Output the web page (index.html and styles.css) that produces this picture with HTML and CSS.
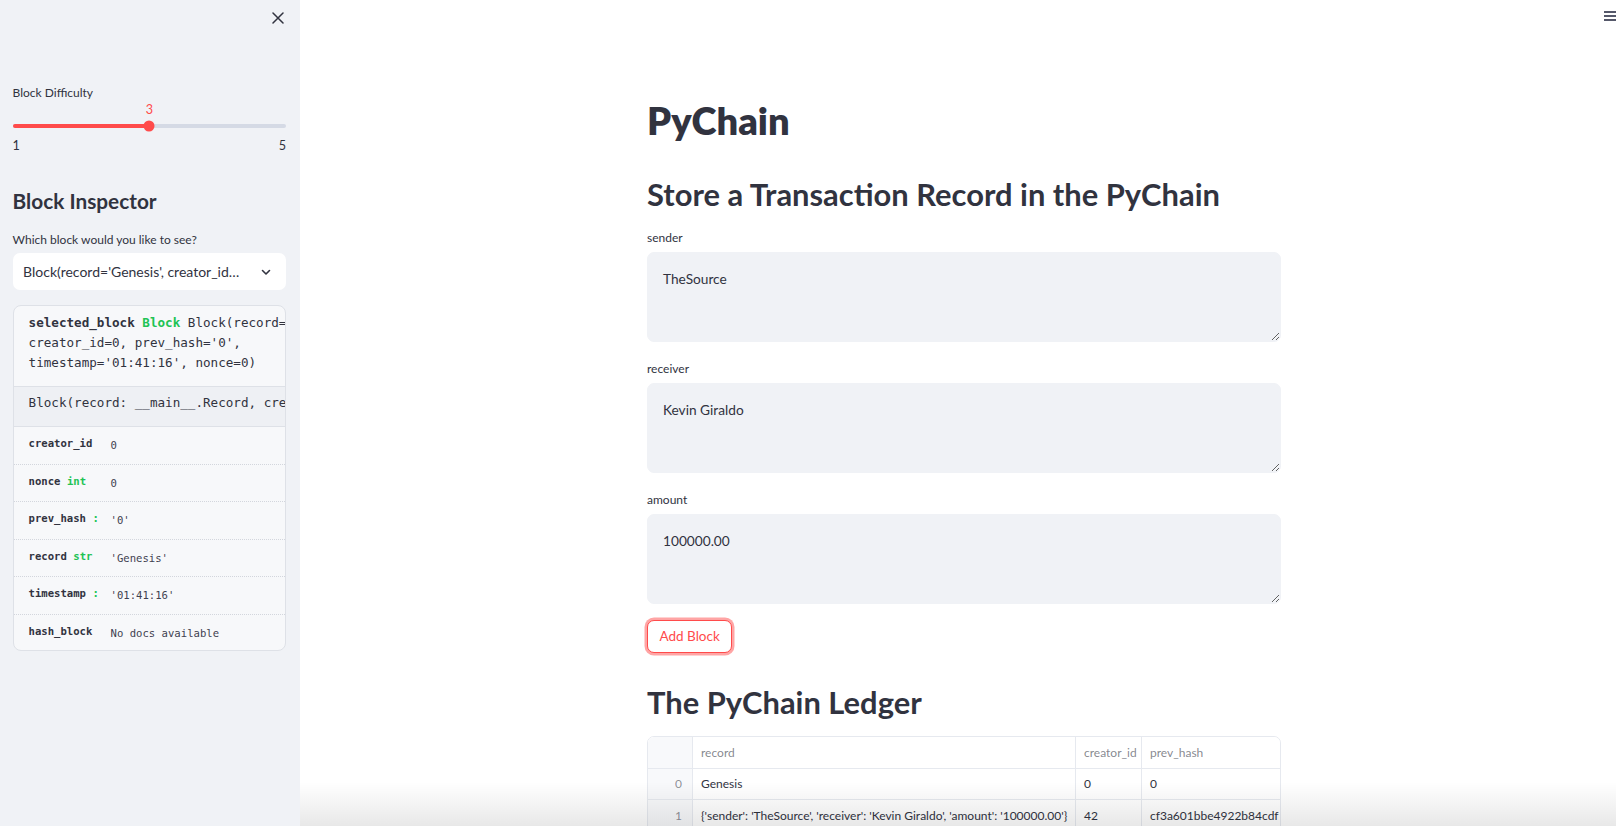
FILE: index.html
```html
<!DOCTYPE html>
<html lang="en">
<head>
<meta charset="utf-8">
<title>PyChain</title>
<link rel="stylesheet" href="styles.css">
</head>
<body>
<aside class="sidebar">
  <div class="sb-top">
    <button class="close-btn" aria-label="Close sidebar">
      <svg width="12" height="12" viewBox="0 0 12 12"><path d="M1 1L11 11M11 1L1 11" stroke="#31333F" stroke-width="1.5" fill="none" stroke-linecap="round"/></svg>
    </button>
  </div>
  <div class="sb-content">
    <div class="wlabel">Block Difficulty</div>
    <div class="slider">
      <div class="slider-value-row"><span class="slider-value" style="left:50%">3</span></div>
      <div class="track-wrap">
        <div class="track"><div class="track-fill" style="width:50%"></div></div>
        <div class="thumb" style="left:50%"></div>
      </div>
      <div class="minmax"><span>1</span><span>5</span></div>
    </div>
    <h2 class="sb-h2">Block Inspector</h2>
    <div class="wlabel sel-label">Which block would you like to see?</div>
    <div class="select">
      <span class="select-text">Block(record='Genesis', creator_id…</span>
      <svg class="chev" width="12" height="12" viewBox="0 0 12 12"><path d="M2.5 4.5L6 8L9.5 4.5" stroke="#31333F" stroke-width="1.6" fill="none" stroke-linecap="round" stroke-linejoin="round"/></svg>
    </div>
    <div class="card">
      <div class="card-head">
        <div class="mono-line"><b>selected_block</b> <span class="green">Block</span> Block(record='Genesis',</div>
        <div class="mono-line">creator_id=0, prev_hash='0',</div>
        <div class="mono-line">timestamp='01:41:16', nonce=0)</div>
      </div>
      <div class="card-sig"><div class="mono-line">Block(record: __main__.Record, creator_id: int, prev_hash: str = '0', timestamp: str = '01:41:16', nonce: int = 0)</div></div>
      <div class="card-row"><div class="rk"><b>creator_id</b></div><div class="rv">0</div></div>
      <div class="card-row"><div class="rk"><b>nonce</b> <span class="green">int</span></div><div class="rv">0</div></div>
      <div class="card-row"><div class="rk"><b>prev_hash</b> <span class="green">:</span></div><div class="rv">'0'</div></div>
      <div class="card-row"><div class="rk"><b>record</b> <span class="green">str</span></div><div class="rv">'Genesis'</div></div>
      <div class="card-row"><div class="rk"><b>timestamp</b> <span class="green">:</span></div><div class="rv">'01:41:16'</div></div>
      <div class="card-row last"><div class="rk"><b>hash_block</b></div><div class="rv">No docs available</div></div>
    </div>
  </div>
</aside>
<main class="main">
  <div class="menu-btn" aria-label="Main menu"><span></span><span></span><span></span></div>
  <div class="block">
    <h1 class="h1">PyChain</h1>
    <h2 class="h2">Store a Transaction Record in the PyChain</h2>
    <div class="field">
      <div class="flabel">sender</div>
      <textarea class="ta">TheSource</textarea>
    </div>
    <div class="field">
      <div class="flabel">receiver</div>
      <textarea class="ta">Kevin Giraldo</textarea>
    </div>
    <div class="field">
      <div class="flabel">amount</div>
      <textarea class="ta">100000.00</textarea>
    </div>
    <div class="btn-row"><button class="btn">Add Block</button></div>
    <h2 class="h2 ledger">The PyChain Ledger</h2>
    <div class="df">
      <div class="df-row df-head">
        <div class="c idx"></div><div class="c">record</div><div class="c">creator_id</div><div class="c last">prev_hash</div>
      </div>
      <div class="df-row">
        <div class="c idx">0</div><div class="c">Genesis</div><div class="c">0</div><div class="c last">0</div>
      </div>
      <div class="df-row">
        <div class="c idx">1</div><div class="c">{'sender': 'TheSource', 'receiver': 'Kevin Giraldo', 'amount': '100000.00'}</div><div class="c">42</div><div class="c last">cf3a601bbe4922b84cdf</div>
      </div>
    </div>
  </div>
  <div class="bottom-fade"></div>
</main>
</body>
</html>
```
FILE: styles.css
```css
* { box-sizing: border-box; }
html, body { margin: 0; padding: 0; }
body {
  width: 1616px;
  height: 826px;
  overflow: hidden;
  display: flex;
  font-family: Lato, "Noto Sans", sans-serif;
  color: #31333F;
  background: #fff;
}

/* ---------- sidebar ---------- */
.sidebar {
  width: 300px;
  flex: none;
  background: #F0F2F6;
  display: flex;
  flex-direction: column;
}
.sb-top {
  height: 36px;
  display: flex;
  justify-content: flex-end;
  align-items: center;
  padding-right: 16px;
}
.close-btn {
  border: 0;
  background: transparent;
  padding: 0;
  width: 12px;
  height: 12px;
  display: flex;
}
.sb-content {
  padding: 0 14px 0 12.6px;
  display: flex;
  flex-direction: column;
}
.wlabel {
  font-size: 12px;
  line-height: 21.6px;
  height: 21.6px;
  margin-top: 46px;
}
.slider { display: flex; flex-direction: column; }
.slider-value-row { position: relative; height: 12px; }
.slider-value {
  position: absolute;
  transform: translateX(-50%);
  color: #FF4B4B;
  font-size: 12.6px;
  line-height: 12px;
  top: 0;
}
.track-wrap { position: relative; height: 20px; display: flex; align-items: center; }
.track {
  width: 100%;
  height: 4px;
  border-radius: 2px;
  background: #D5DAE5;
  overflow: hidden;
}
.track-fill { height: 100%; background: #FF4B4B; }
.thumb {
  position: absolute;
  top: 50%;
  width: 11px;
  height: 11px;
  border-radius: 50%;
  background: #FF4B4B;
  transform: translate(-50%, -50%);
}
.minmax {
  display: flex;
  justify-content: space-between;
  font-size: 12.6px;
  line-height: 20px;
}
.sb-h2 {
  margin: 31px 0 0;
  font-size: 20.8px;
  line-height: 28px;
  font-weight: 700;
}
.sel-label { margin-top: 14px; }
.select {
  margin-top: 3px;
  height: 37px;
  background: #fff;
  border-radius: 7px;
  display: flex;
  align-items: center;
  justify-content: space-between;
  padding: 0 14px 0 10.5px;
  font-size: 14px;
}
.select-text { white-space: nowrap; overflow: hidden; }
.chev { flex: none; }

.card {
  margin-top: 15px;
  height: 346px;
  background: #F7F8FA;
  border: 1px solid #DEE1E7;
  border-radius: 8px;
  overflow: hidden;
  font-family: "DejaVu Sans Mono", monospace;
}
.mono-line { white-space: nowrap; }
.card-head {
  padding: 7px 0 13px 15px;
  font-size: 12.6px;
  line-height: 20px;
  border-bottom: 1px solid #DEE1E7;
}
.card-head b { font-weight: 700; }
.green { color: #21C354; font-weight: 700; }
.card-sig {
  padding: 6px 0 13px 15px;
  font-size: 12.6px;
  line-height: 20px;
  background: #EEF0F4;
  border-bottom: 1px solid #DEE1E7;
  overflow: hidden;
}
.card-row {
  height: 37.5px;
  display: grid;
  grid-template-columns: 82px 1fr;
  padding-left: 15px;
  border-bottom: 1px dotted #D3D6DD;
  font-size: 10.6px;
  line-height: 14px;
}
.card-row.last { border-bottom: 0; }
.rk { padding-top: 9px; white-space: nowrap; }
.rk b { font-weight: 700; }
.rv { padding-top: 11px; color: #3f4150; white-space: nowrap; }

/* ---------- main ---------- */
.main {
  flex: 1;
  position: relative;
  overflow: hidden;
}
.menu-btn {
  position: absolute;
  top: 11px;
  right: -2px;
  width: 14px;
  display: flex;
  flex-direction: column;
  gap: 2.5px;
}
.menu-btn span { height: 1.6px; background: #55586A; display: block; }
.block {
  width: 634px;
  margin-left: 347px;
  padding-top: 97px;
  display: flex;
  flex-direction: column;
}
.h1 {
  margin: 0;
  font-size: 38px;
  line-height: 47.5px;
  font-weight: 800;
}
.h2 {
  margin: 30.5px 0 0;
  font-size: 30.9px;
  line-height: 39px;
  font-weight: 700;
}
.field { margin-top: 12.6px; display: flex; flex-direction: column; }
.field + .field { margin-top: 16px; }
.flabel {
  font-size: 12px;
  line-height: 21.6px;
  height: 25px;
}
.ta {
  width: 100%;
  height: 90px;
  resize: vertical;
  background: #F0F2F6;
  border: 1px solid #F0F2F6;
  border-radius: 7px;
  padding: 14.4px 15px;
  font-family: Lato, "Noto Sans", sans-serif;
  font-size: 13.7px;
  line-height: 23px;
  color: #31333F;
  outline: none;
  display: block;
}
.btn-row { margin-top: 16px; display: flex; }
.btn {
  height: 33px;
  padding: 0 11.5px;
  background: #fff;
  border: 1px solid #FF4B4B;
  border-radius: 7px;
  box-shadow: 0 0 0 2.5px rgba(255, 75, 75, 0.5);
  color: #FF4B4B;
  font-family: Lato, "Noto Sans", sans-serif;
  font-size: 13.5px;
}
.h2.ledger { margin-top: 30.5px; }
.df {
  margin-top: 13.5px;
  border: 1px solid #E6E9EF;
  border-radius: 7px;
  overflow: hidden;
  font-size: 12px;
}
.df-row {
  display: grid;
  grid-template-columns: 45px 383px 66px 1fr;
  height: 31.5px;
  border-bottom: 1px solid #E6E9EF;
}
.df-head { height: 32px; background: #fff; color: rgba(49, 51, 63, 0.6); }
.c {
  padding: 0 8px;
  display: flex;
  align-items: center;
  border-right: 1px solid #E6E9EF;
  white-space: nowrap;
  overflow: hidden;
}
.c.last { border-right: 0; }
.c.idx {
  justify-content: flex-end;
  padding-right: 10px;
  color: rgba(49, 51, 63, 0.55);
  background: #F8F9FB;
}
.bottom-fade {
  position: absolute;
  left: 0;
  right: 0;
  bottom: 0;
  height: 44px;
  background: linear-gradient(to bottom, rgba(0, 0, 0, 0), rgba(0, 0, 0, 0.09));
  pointer-events: none;
}
```
